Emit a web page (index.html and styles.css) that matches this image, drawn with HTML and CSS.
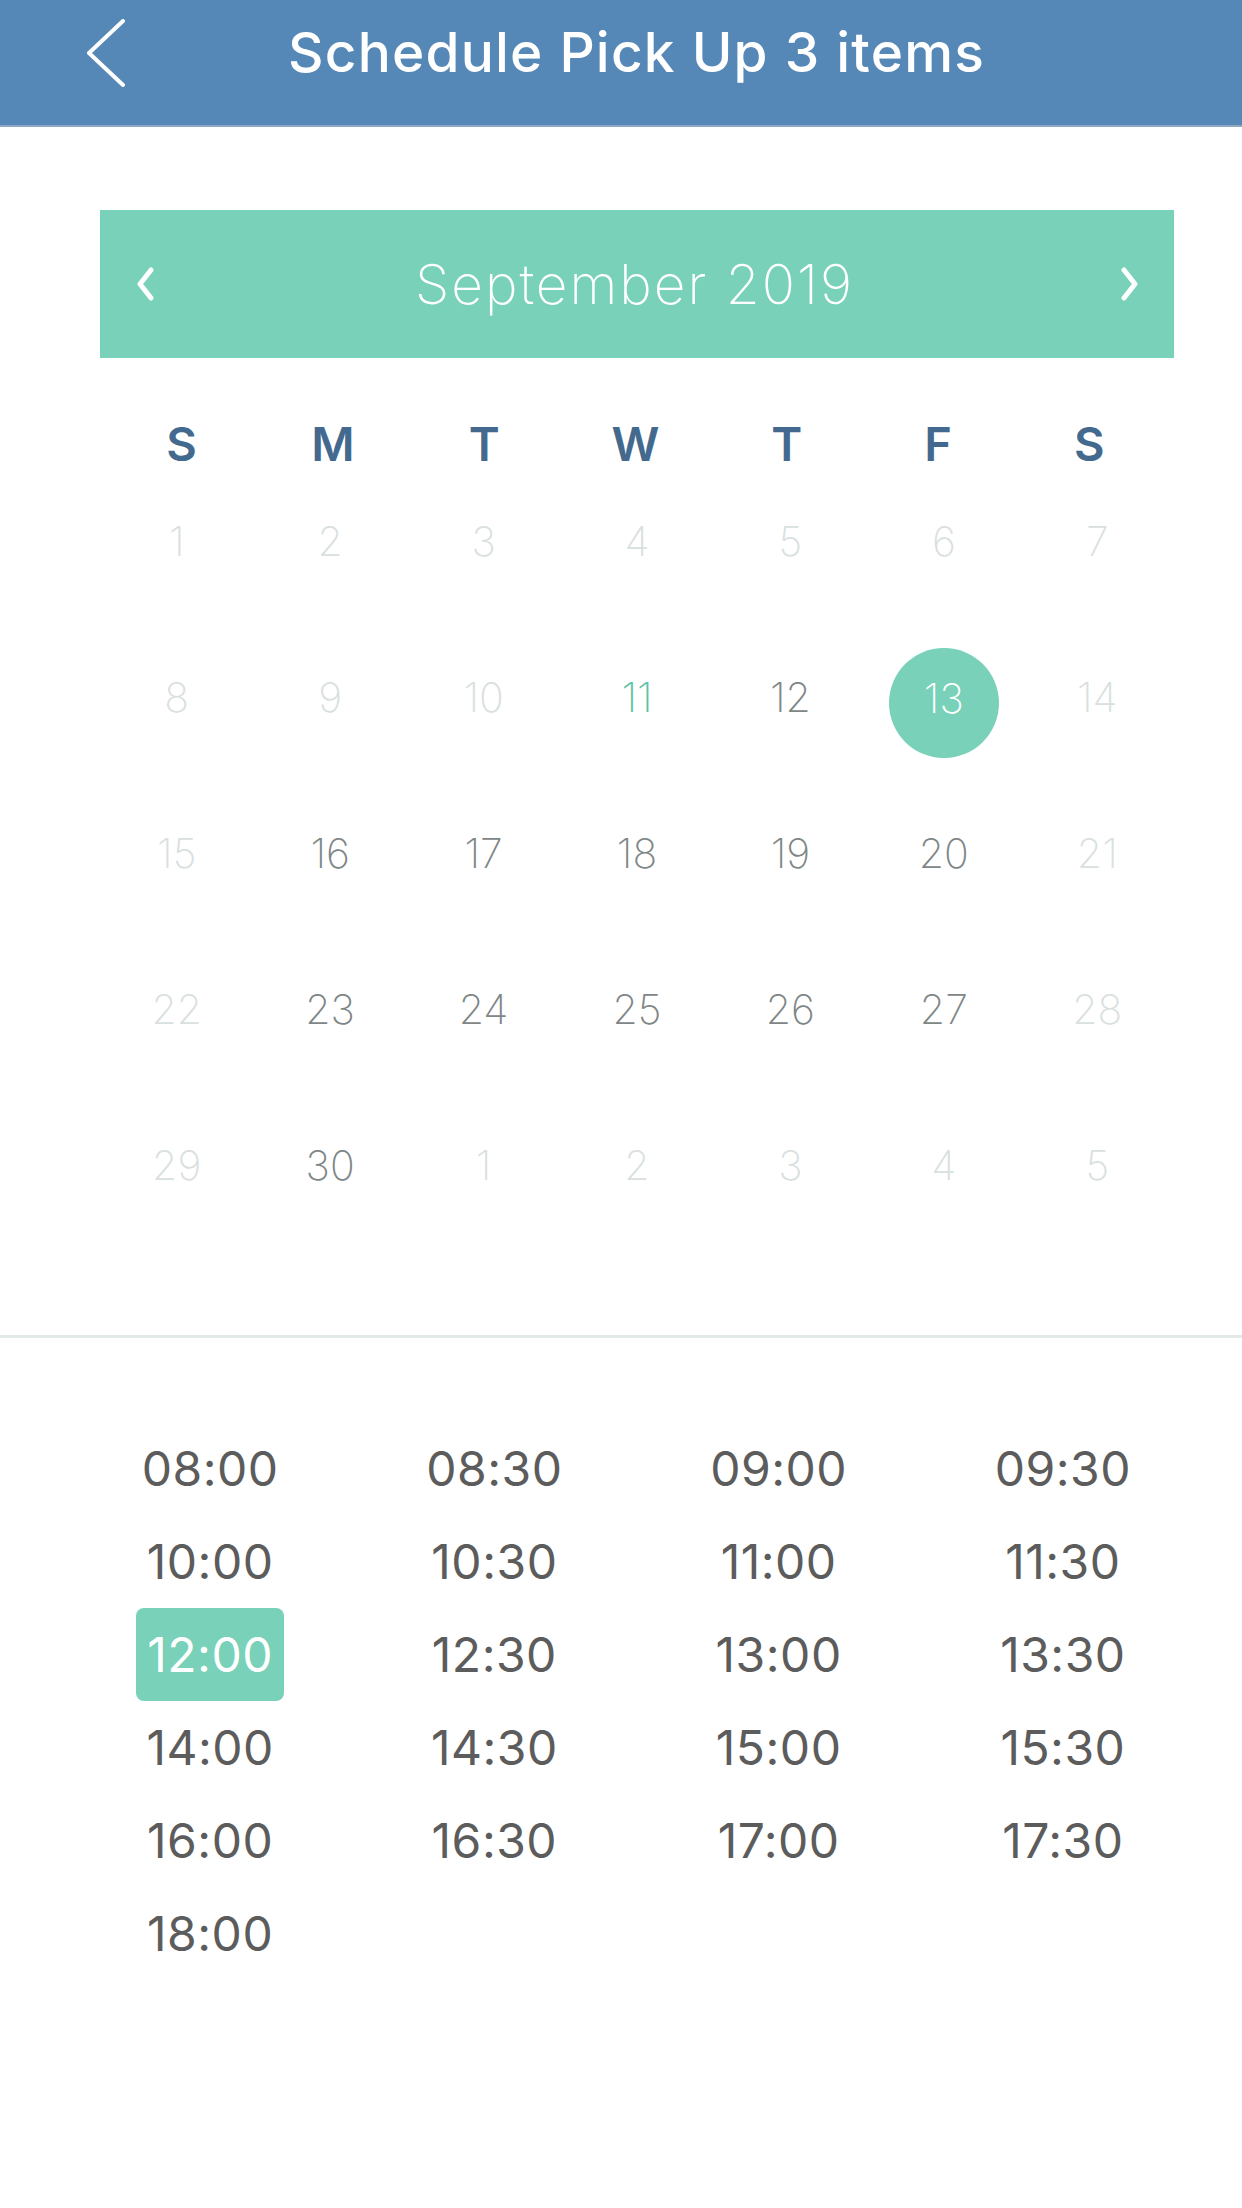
FILE: index.html
```html
<!DOCTYPE html>
<html lang="en">
<head>
<meta charset="utf-8">
<title>Schedule Pick Up</title>
<link rel="stylesheet" href="styles.css">
</head>
<body>
<div class="app">
  <header class="topbar">
    <svg class="back" viewBox="0 0 40 68" width="40" height="68" aria-hidden="true">
      <polyline points="37,2 3,34 37,66" fill="none" stroke="#fff" stroke-width="4" stroke-linecap="round" stroke-linejoin="round"/>
    </svg>
    <h1 class="title">Schedule Pick Up 3 items</h1>
  </header>

  <section class="calendar">
    <div class="month-bar">
      <svg class="nav" viewBox="0 0 20 34" width="20" height="34" aria-hidden="true">
        <polyline points="16,3 5,17 16,31" fill="none" stroke="#fff" stroke-width="5" stroke-linecap="round" stroke-linejoin="round"/>
      </svg>
      <div class="month">September 2019</div>
      <svg class="nav" viewBox="0 0 20 34" width="20" height="34" aria-hidden="true">
        <polyline points="4,3 15,17 4,31" fill="none" stroke="#fff" stroke-width="5" stroke-linecap="round" stroke-linejoin="round"/>
      </svg>
    </div>

    <div class="weekdays">
      <span>S</span><span>M</span><span>T</span><span>W</span><span>T</span><span>F</span><span>S</span>
    </div>

    <div class="days">
      <div class="day off">1</div><div class="day off">2</div><div class="day off">3</div><div class="day off">4</div><div class="day off">5</div><div class="day off">6</div><div class="day off">7</div>
      <div class="day off">8</div><div class="day off">9</div><div class="day off">10</div><div class="day today">11</div><div class="day">12</div><div class="day selected"><span>13</span></div><div class="day off">14</div>
      <div class="day off">15</div><div class="day">16</div><div class="day">17</div><div class="day">18</div><div class="day">19</div><div class="day">20</div><div class="day off">21</div>
      <div class="day off">22</div><div class="day">23</div><div class="day">24</div><div class="day">25</div><div class="day">26</div><div class="day">27</div><div class="day off">28</div>
      <div class="day off">29</div><div class="day">30</div><div class="day off">1</div><div class="day off">2</div><div class="day off">3</div><div class="day off">4</div><div class="day off">5</div>
    </div>
  </section>

  <section class="times">
    <div class="slot">08:00</div><div class="slot">08:30</div><div class="slot">09:00</div><div class="slot">09:30</div>
    <div class="slot">10:00</div><div class="slot">10:30</div><div class="slot">11:00</div><div class="slot">11:30</div>
    <div class="slot selected"><span>12:00</span></div><div class="slot">12:30</div><div class="slot">13:00</div><div class="slot">13:30</div>
    <div class="slot">14:00</div><div class="slot">14:30</div><div class="slot">15:00</div><div class="slot">15:30</div>
    <div class="slot">16:00</div><div class="slot">16:30</div><div class="slot">17:00</div><div class="slot">17:30</div>
    <div class="slot">18:00</div>
  </section>
</div>
</body>
</html>
```

FILE: styles.css
```css
* { box-sizing: border-box; }

html, body {
  margin: 0;
  padding: 0;
  background: #ffffff;
}

body {
  font-family: Inter, "Open Sans", "Liberation Sans", sans-serif;
}

.app {
  width: 1242px;
  min-height: 2208px;
  background: #ffffff;
}

.topbar {
  height: 127px;
  background: #5688b7;
  border-bottom: 2px solid #8ea7c2;
  display: flex;
  align-items: center;
  padding-left: 86px;
  gap: 162px;
}

.back {
  display: block;
  width: 40px;
  height: 68px;
  margin-top: -20px;
}

.title {
  margin: 0;
  color: #ffffff;
  font-size: 55px;
  font-weight: 500;
  letter-spacing: 1.2px;
  line-height: 1;
  margin-top: -20px;
}

.calendar {
  margin: 83px 68px 0 100px;
}

.month-bar {
  height: 148px;
  background: #78d1b8;
  display: flex;
  align-items: center;
  justify-content: space-between;
  padding: 0 34px 0 35px;
}

.nav {
  display: block;
}

.month {
  color: #ffffff;
  font-size: 55px;
  font-weight: 200;
  letter-spacing: 2px;
  margin-right: 6px;
}

.weekdays {
  display: grid;
  grid-template-columns: repeat(7, 1fr);
  height: 44px;
  margin: 57px 9px 0 6px;
  align-items: center;
}

.weekdays span {
  text-align: center;
  color: #436a8e;
  font-size: 47px;
  font-weight: 600;
}

.days {
  display: grid;
  grid-template-columns: repeat(7, 1fr);
  grid-auto-rows: 156px;
  margin-top: 4px;
}

.day {
  display: flex;
  align-items: center;
  justify-content: center;
  font-size: 41px;
  font-weight: 200;
  color: #7e8686;
}

.day.off {
  color: #d9e0e0;
}

.day.today {
  color: #5fc3a6;
}

.day.selected span {
  width: 110px;
  height: 110px;
  border-radius: 50%;
  background: #78d1b8;
  color: #ffffff;
  display: flex;
  align-items: center;
  justify-content: center;
  margin-top: 12px;
  padding-bottom: 10px;
}

.times {
  margin-top: 92px;
  border-top: 3px solid #e3e8e8;
  padding: 84px 37px 0 68px;
  display: grid;
  grid-template-columns: repeat(4, 1fr);
  grid-auto-rows: 93px;
}

.slot {
  display: flex;
  align-items: center;
  justify-content: center;
  font-size: 48px;
  font-weight: 400;
  letter-spacing: 0.5px;
  color: #5c5c5c;
}

.slot.selected span {
  height: 93px;
  padding: 0 11px;
  border-radius: 8px;
  background: #78d1b8;
  color: #ffffff;
  display: flex;
  align-items: center;
}
```
